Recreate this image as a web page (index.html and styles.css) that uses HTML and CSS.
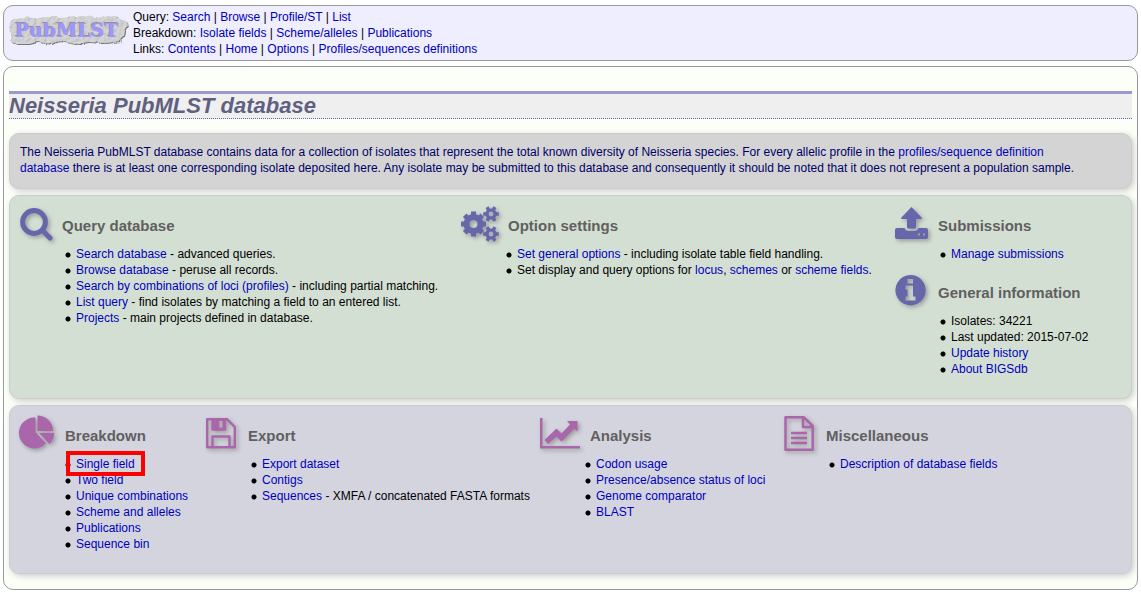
FILE: index.html
```html
<!DOCTYPE html>
<html lang="en">
<head>
<meta charset="utf-8">
<title>Neisseria PubMLST database</title>
<link rel="stylesheet" href="styles.css">
</head>
<body>
<header class="banner">
  <svg class="logo" width="120" height="34" viewBox="0 0 120 34" role="img" aria-label="PubMLST">
    <defs>
      <filter id="stone" x="-5%" y="-10%" width="110%" height="125%">
        <feTurbulence type="fractalNoise" baseFrequency="0.3" numOctaves="3" seed="4" result="n"/>
        <feTurbulence type="fractalNoise" baseFrequency="0.15" numOctaves="2" seed="9" result="edge"/>
        <feDisplacementMap in="SourceGraphic" in2="edge" scale="5" xChannelSelector="R" yChannelSelector="G" result="d"/>
        <feDiffuseLighting in="n" surfaceScale="1" lighting-color="#d8d8d8" result="l"><feDistantLight azimuth="225" elevation="68"/></feDiffuseLighting>
        <feComposite in="l" in2="d" operator="in" result="t"/>
        <feOffset in="d" dx="1" dy="1" result="o"/>
        <feFlood flood-color="#777777"/>
        <feComposite in2="o" operator="in" result="s"/>
        <feMerge><feMergeNode in="s"/><feMergeNode in="t"/></feMerge>
      </filter>
    </defs>
    <path filter="url(#stone)" fill="#c6c6c6" d="M4 5L16 4 18 2 22 5 36 3 52 3 70 2 86 3 94 4 104 2 110 5 117 7 119 11 116 17 115 23 111 27 97 29 80 28 66 30 50 27 42 30 28 28 20 30 7 30 2 28 2 20 0 13Z"/>
    <g class="logo-text"><text x="5" y="22" fill="#9a8a9c">PubMLST</text><text x="6" y="23" fill="#9999ff">PubMLST</text></g>
  </svg>
  <nav class="menu">
    <div>Query: <a href="#">Search</a> | <a href="#">Browse</a> | <a href="#">Profile/ST</a> | <a href="#">List</a></div>
    <div>Breakdown: <a href="#">Isolate fields</a> | <a href="#">Scheme/alleles</a> | <a href="#">Publications</a></div>
    <div>Links: <a href="#">Contents</a> | <a href="#">Home</a> | <a href="#">Options</a> | <a href="#">Profiles/sequences definitions</a></div>
  </nav>
</header>
<main class="page">
  <h1>Neisseria PubMLST database</h1>
  <p class="box intro">The Neisseria PubMLST database contains data for a collection of isolates that represent the total known diversity of Neisseria species. For every allelic profile in the <a href="#">profiles/sequence definition<br>database</a> there is at least one corresponding isolate deposited here. Any isolate may be submitted to this database and consequently it should be noted that it does not represent a population sample.</p>

  <div class="box query">
    <section>
      <div class="head">
        <svg class="icon" width="36" height="36" viewBox="0 0 36 36"><circle cx="14" cy="15" r="11.400" fill="none" stroke="currentColor" stroke-width="5"/><path d="M22.500 23.500L30 31" stroke="currentColor" stroke-width="5" stroke-linecap="round"/></svg>
        <h2>Query database</h2>
      </div>
      <ul>
        <li><a href="#">Search database</a> - advanced queries.</li>
        <li><a href="#">Browse database</a> - peruse all records.</li>
        <li><a href="#">Search by combinations of loci (profiles)</a> - including partial matching.</li>
        <li><a href="#">List query</a> - find isolates by matching a field to an entered list.</li>
        <li><a href="#">Projects</a> - main projects defined in database.</li>
      </ul>
    </section>
    <section class="options">
      <div class="head">
        <svg class="icon" width="40" height="36" viewBox="0 0 40 36">
          <g fill="none" stroke="currentColor">
            <circle cx="13.500" cy="17" r="7" stroke-width="6"/>
            <g stroke-width="5"><path d="M13.500 4.500v4M13.500 25.500v4M1 17h4M22 17h4M4.700 8.200l3 3M19.300 22.800l3 3M4.700 25.800l3-3M19.300 11.200l3-3"/></g>
            <circle cx="31" cy="7" r="4" stroke-width="3.200"/><circle cx="31" cy="27" r="4" stroke-width="3.200"/>
            <g stroke-width="3.400"><path d="M23.200 7h3M35.800 7h3M27.100 .2l1.500 2.600M33.400 11.200l1.500 2.600M27.100 13.800l1.500-2.600M33.400 2.800l1.500-2.600M23.200 27h3M35.800 27h3M27.100 20.200l1.500 2.600M33.400 31.200l1.500 2.600M27.100 33.800l1.500-2.600M33.400 22.800l1.500-2.600"/></g>
          </g>
        </svg>
        <h2>Option settings</h2>
      </div>
      <ul>
        <li><a href="#">Set general options</a> - including isolate table field handling.</li>
        <li>Set display and query options for <a href="#">locus</a>, <a href="#">schemes</a> or <a href="#">scheme fields</a>.</li>
      </ul>
    </section>
    <div class="side">
      <section>
        <div class="head">
          <svg class="icon" width="34" height="36" viewBox="0 0 34 36"><path fill="currentColor" fill-rule="evenodd" d="M16.500 0L27 11Q27 12 26 12H21V20Q21 21.500 19.500 21.500H13.500Q12 21.500 12 20V12H7Q6 12 6 11ZM2 21H9.500Q10.500 24 13.500 24H19.500Q22.500 24 23.500 21H31Q33 21 33 23V30Q33 32 31 32H2Q0 32 0 30V23Q0 21 2 21ZM23 26.500V28.500H25V26.500ZM28 26.500V28.500H30V26.500Z"/></svg>
          <h2>Submissions</h2>
        </div>
        <ul>
          <li><a href="#">Manage submissions</a></li>
        </ul>
      </section>
      <section>
        <div class="head">
          <svg class="icon" width="34" height="36" viewBox="0 0 34 36"><path fill="currentColor" fill-rule="evenodd" d="M15.500 1a15.200 15.200 0 1 0 .1 0ZM12.500 5H18V9.500H12.500ZM10.500 11.500H18V22.500H20.500V26.500H10.500V22.500H12.500V15.500H10.500Z"/></svg>
          <h2>General information</h2>
        </div>
        <ul>
          <li>Isolates: 34221</li>
          <li>Last updated: 2015-07-02</li>
          <li><a href="#">Update history</a></li>
          <li><a href="#">About BIGSdb</a></li>
        </ul>
      </section>
    </div>
  </div>

  <div class="box analysis">
    <section class="breakdown">
      <div class="head">
        <svg class="icon" width="36" height="36" viewBox="0 0 36 36"><path fill="currentColor" d="M15.500 1.500V16.500L26 27.200A15.500 15.500 0 1 1 15.500 1.500ZM17.500 -.5A15.500 15.500 0 0 1 33 15H17.500ZM19 17H34.200Q34 23.500 29.500 28Z"/></svg>
        <h2>Breakdown</h2>
      </div>
      <ul>
        <li><a class="highlight" href="#">Single field</a></li>
        <li><a href="#">Two field</a></li>
        <li><a href="#">Unique combinations</a></li>
        <li><a href="#">Scheme and alleles</a></li>
        <li><a href="#">Publications</a></li>
        <li><a href="#">Sequence bin</a></li>
      </ul>
    </section>
    <section>
      <div class="head">
        <svg class="icon" width="34" height="36" viewBox="0 0 34 36"><path fill="none" stroke="currentColor" stroke-width="2.400" stroke-linejoin="round" d="M1.200 3.200H21L28.800 11V31.300H1.200ZM6.500 31V20.500H23.500V31M6.500 3V13.500H19V3"/><path fill="currentColor" fill-rule="evenodd" d="M6 3H19V14H6ZM13 5V11.500H16.500V5Z"/></svg>
        <h2>Export</h2>
      </div>
      <ul>
        <li><a href="#">Export dataset</a></li>
        <li><a href="#">Contigs</a></li>
        <li><a href="#">Sequences</a> - XMFA / concatenated FASTA formats</li>
      </ul>
    </section>
    <section class="charts">
      <div class="head">
        <svg class="icon" width="41" height="36" viewBox="0 0 41 36"><path fill="currentColor" d="M0 2H2.500V30H40V32.500H0ZM27 5H37.500V15.500L34.500 12.500L21.500 25.500L16.500 20.500L8 28L4.500 24L16.500 12.500L21.500 17.500L30 8.500Z"/></svg>
        <h2>Analysis</h2>
      </div>
      <ul>
        <li><a href="#">Codon usage</a></li>
        <li><a href="#">Presence/absence status of loci</a></li>
        <li><a href="#">Genome comparator</a></li>
        <li><a href="#">BLAST</a></li>
      </ul>
    </section>
    <section class="misc">
      <div class="head">
        <svg class="icon" width="32" height="36" viewBox="0 0 32 36"><path fill="none" stroke="currentColor" stroke-width="2.500" stroke-linejoin="round" d="M1.500 1.300H20L28.700 10V33.700H1.500ZM19 1.500V11H28.500M7 17H23M7 22H23M7 27H23"/></svg>
        <h2>Miscellaneous</h2>
      </div>
      <ul>
        <li><a href="#">Description of database fields</a></li>
      </ul>
    </section>
  </div>
</main>
</body>
</html>
```
FILE: styles.css
```css
* { box-sizing: border-box; }
body {
  margin: 5px 3px;
  background: #fff;
  color: #000;
  font: 12px/16px "Liberation Sans", Arial, sans-serif;
}
a { color: #0000bb; text-decoration: none; }
.banner {
  display: flex;
  align-items: flex-start;
  gap: 4px;
  padding: 3px 5px;
  border: 1px solid #999;
  border-radius: 10px;
  background: #eeeeff;
}
.logo { margin-top: 5px; }
.logo-text { font: bold 19px "DejaVu Serif", serif; }
.page {
  margin-top: 5px;
  padding: 24px 5px 15px;
  border: 1px solid #999;
  border-radius: 10px;
  background: #fcfff8;
}
h1 {
  margin: 0 0 14px;
  border-top: 3px solid #9999cc;
  border-bottom: 1px dotted #6666aa;
  background: #efefef;
  color: #606080;
  font: italic bold 22px/24px "Liberation Sans", Arial, sans-serif;
}
.box {
  margin: 0 0 6px;
  padding: 10px 0 0 10px;
  border: 1px solid #ccc;
  border-radius: 10px;
  box-shadow: 2px 2px 6px #ccc;
}
.intro { padding: 10px 10px 12px; background: #d4d4d4; color: #000066; }
.query {
  display: grid;
  grid-template-columns: 440fr 435fr 236fr;
  min-height: 204px;
  background: #d4dfd4;
}
.analysis {
  display: grid;
  grid-template-columns: 186fr 334fr 244fr 347fr;
  min-height: 169px;
  margin: 0;
  background: #d4d4df;
}
.head { display: flex; gap: 8px; height: 40px; }
.query .head { gap: 6px; }
.query .options .head { gap: 8px; }
.query .side .head { gap: 9px; }
.breakdown .head, .charts .head { gap: 9px; }
.misc .head { gap: 10px; }
.icon {
  flex: none;
  margin-top: 1px;
  overflow: visible;
  color: #6666aa;
  filter: drop-shadow(2px 2px 2px #999);
}
.analysis .icon { margin-top: 0; color: #aa66aa; }
h2 { margin: 11px 0 0; color: #606060; font-size: 15px; line-height: 18px; }
ul { margin: 0; padding: 0 0 0 45px; list-style: none; }
li {
  padding-left: 11px;
  background: radial-gradient(circle at 3px 9px, #000 2px, transparent 3px);
}
.options ul { padding-left: 46px; }
.side section + section { margin-top: 11px; }
.highlight { position: relative; }
.highlight::after {
  content: "";
  position: absolute;
  z-index: 1;
  inset: -6px -10px -5px;
  border: 4px solid #f00;
}
```
